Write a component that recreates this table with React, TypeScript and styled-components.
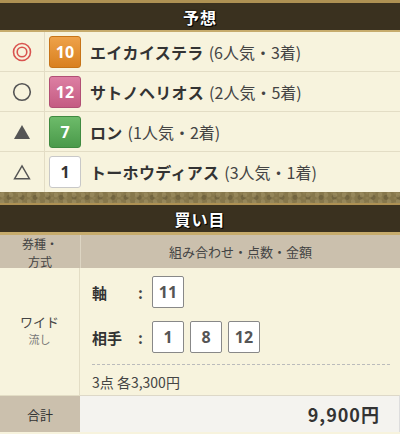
import React from "react";
import styled, { createGlobalStyle, css } from "styled-components";

const Global = createGlobalStyle`
  html, body { margin: 0; padding: 0; background: #f7f3dd; }
  body { font-family: "Noto Sans CJK JP", "Noto Sans", sans-serif; color: #333; }
  * { box-sizing: border-box; }
`;

const Page = styled.div`
  width: 400px;
  height: 434px;
  overflow: hidden;
  background: #f7f3dd;
`;

const SectionHeader = styled.div<{ $top: number; $bottom: number }>`
  height: ${(p) => 27 + p.$top + p.$bottom}px;
  background: #3a311f;
  border-top: ${(p) => p.$top}px solid #ae9153;
  border-bottom: ${(p) => p.$bottom}px solid #c6ab6c;
  display: flex;
  align-items: center;
  justify-content: center;
  color: #fff;
  font-weight: 700;
  font-size: 16px;
  letter-spacing: 1px;
  text-shadow: 1px 1px 0 #000, 0 0 2px #000;
`;

const PickList = styled.div`
  display: flex;
  flex-direction: column;
`;

const PickRow = styled.div<{ $last?: boolean }>`
  height: 40px;
  display: grid;
  grid-template-columns: 45px 1fr;
  border-bottom: ${(p) => (p.$last ? "none" : "1px solid #e3ddc5")};
`;

const MarkCell = styled.div`
  display: flex;
  align-items: center;
  justify-content: center;
  border-right: 1px solid #e3ddc5;
`;

const HorseCell = styled.div`
  display: flex;
  align-items: center;
  padding-left: 4px;
  gap: 9px;
`;

const badgeColors = {
  orange: css`
    background: linear-gradient(#eea24a, #d9801f);
    border: 1px solid #c77418;
    color: #fff;
  `,
  pink: css`
    background: linear-gradient(#dd7fa3, #c45b82);
    border: 1px solid #b14f74;
    color: #fff;
  `,
  green: css`
    background: linear-gradient(#6dbb6a, #4a9a4a);
    border: 1px solid #3f8a40;
    color: #fff;
  `,
  white: css`
    background: #fff;
    border: 1px solid #c8c8c8;
    color: #333;
  `,
};

type BadgeColor = keyof typeof badgeColors;

const Badge = styled.div<{ $color: BadgeColor }>`
  width: 32px;
  height: 32px;
  border-radius: 3px;
  display: flex;
  align-items: center;
  justify-content: center;
  font-family: "Noto Sans", "DejaVu Sans", sans-serif;
  font-weight: 700;
  font-size: 16px;
  ${(p) => badgeColors[p.$color]}
`;

const HorseName = styled.span`
  font-weight: 700;
  font-size: 16px;
  color: #333;
  letter-spacing: 0.3px;
`;

const HorseInfo = styled.span`
  font-weight: 400;
  font-size: 16px;
  color: #444;
  margin-left: 5px;
`;

const Texture = styled.div`
  height: 11px;
  background-color: #86774b;
  background-image:
    radial-gradient(circle at 20% 40%, rgba(160, 145, 100, 0.6) 0 2px, transparent 3px),
    radial-gradient(circle at 70% 60%, rgba(100, 88, 55, 0.6) 0 2px, transparent 3px),
    radial-gradient(circle at 45% 20%, rgba(150, 135, 90, 0.5) 0 1px, transparent 2px);
  background-size: 9px 7px, 13px 9px, 7px 5px;
`;

const BetTable = styled.div`
  display: grid;
  grid-template-columns: 80px 1fr;
  grid-template-rows: 33px 127px 37px;
`;

const HeadCell = styled.div`
  background: #cbc0ad;
  display: flex;
  flex-direction: column;
  align-items: center;
  justify-content: center;
  text-align: center;
  font-size: 13px;
  color: #444;
  & + & {
    border-left: 1px solid #ddd5c3;
  }
`;

const HeadLine = styled.div`
  font-size: 12px;
  line-height: 17px;
  padding-top: 1px;
`;

const TypeCell = styled.div`
  display: flex;
  flex-direction: column;
  align-items: center;
  justify-content: center;
  border-right: 1px solid #e3ddc5;
  padding-bottom: 4px;
`;

const TypeName = styled.div`
  font-size: 13px;
  color: #444;
  line-height: 19px;
`;

const TypeSub = styled.div`
  font-size: 11px;
  color: #777;
  line-height: 17px;
`;

const ComboCell = styled.div`
  display: flex;
  flex-direction: column;
  padding: 8px 8px 0 12px;
`;

const ComboLine = styled.div<{ $gap: number }>`
  display: flex;
  align-items: center;
  margin-top: ${(p) => p.$gap}px;
`;

const ComboLabel = styled.span`
  width: 46px;
  font-weight: 700;
  font-size: 15px;
  color: #333;
`;

const Colon = styled.span`
  width: 14px;
  font-weight: 700;
  font-size: 15px;
  color: #444;
`;

const NumBoxes = styled.div`
  display: flex;
  gap: 6px;
`;

const NumBox = styled.div`
  width: 32px;
  height: 32px;
  background: #fff;
  border: 1px solid #888;
  border-radius: 2px;
  display: flex;
  align-items: center;
  justify-content: center;
  font-family: "Noto Sans", "DejaVu Sans", sans-serif;
  font-weight: 700;
  font-size: 16px;
  color: #555;
`;

const Dashed = styled.div`
  margin-top: 11px;
  border-top: 1px dashed #bbb;
  margin-right: 2px;
`;

const Summary = styled.div`
  font-size: 14px;
  color: #444;
  margin-top: 7px;
`;

const TotalLabel = styled.div`
  background: #cbc0ad;
  border-top: 1px solid #e3ddc5;
  display: flex;
  align-items: center;
  justify-content: center;
  font-size: 13px;
  color: #333;
`;

const TotalValue = styled.div`
  background: #f4f3ef;
  border-top: 1px solid #ddd8c8;
  border-right: 1px solid #ddd;
  display: flex;
  align-items: center;
  justify-content: flex-end;
  padding-right: 19px;
  font-weight: 700;
  font-size: 18px;
  letter-spacing: 1px;
  color: #333;
`;

const Mark = ({ kind }: { kind: "dbl" | "circle" | "tri" | "otri" }) => {
  if (kind === "dbl")
    return (
      <svg width="20" height="20" viewBox="0 0 20 20">
        <circle cx="10" cy="10" r="8.5" fill="none" stroke="#d9534f" strokeWidth="1.6" />
        <circle cx="10" cy="10" r="4.8" fill="none" stroke="#d9534f" strokeWidth="1.6" />
      </svg>
    );
  if (kind === "circle")
    return (
      <svg width="20" height="20" viewBox="0 0 20 20">
        <circle cx="10" cy="10" r="8.3" fill="none" stroke="#555" strokeWidth="1.6" />
      </svg>
    );
  if (kind === "tri")
    return (
      <svg width="18" height="16" viewBox="0 0 18 16">
        <polygon points="9,1 17,15 1,15" fill="#555" />
      </svg>
    );
  return (
    <svg width="18" height="16" viewBox="0 0 18 16">
      <polygon points="9,1.8 16.5,14.8 1.5,14.8" fill="none" stroke="#555" strokeWidth="1.4" />
    </svg>
  );
};

const picks: { mark: "dbl" | "circle" | "tri" | "otri"; num: string; color: BadgeColor; name: string; info: string }[] = [
  { mark: "dbl", num: "10", color: "orange", name: "エイカイステラ", info: "(6人気・3着)" },
  { mark: "circle", num: "12", color: "pink", name: "サトノヘリオス", info: "(2人気・5着)" },
  { mark: "tri", num: "7", color: "green", name: "ロン", info: "(1人気・2着)" },
  { mark: "otri", num: "1", color: "white", name: "トーホウディアス", info: "(3人気・1着)" },
];

export default function App() {
  return (
    <Page>
      <Global />
      <SectionHeader $top={3} $bottom={2}>予想</SectionHeader>
      <PickList>
        {picks.map((p, i) => (
          <PickRow key={p.num} $last={i === picks.length - 1}>
            <MarkCell>
              <Mark kind={p.mark} />
            </MarkCell>
            <HorseCell>
              <Badge $color={p.color}>{p.num}</Badge>
              <div>
                <HorseName>{p.name}</HorseName>
                <HorseInfo>{p.info}</HorseInfo>
              </div>
            </HorseCell>
          </PickRow>
        ))}
      </PickList>
      <Texture />
      <SectionHeader $top={2} $bottom={3}>買い目</SectionHeader>
      <BetTable>
        <HeadCell>
          <HeadLine>券種・</HeadLine>
          <HeadLine>方式</HeadLine>
        </HeadCell>
        <HeadCell>組み合わせ・点数・金額</HeadCell>
        <TypeCell>
          <TypeName>ワイド</TypeName>
          <TypeSub>流し</TypeSub>
        </TypeCell>
        <ComboCell>
          <ComboLine $gap={0}>
            <ComboLabel>軸</ComboLabel>
            <Colon>:</Colon>
            <NumBoxes>
              <NumBox>11</NumBox>
            </NumBoxes>
          </ComboLine>
          <ComboLine $gap={13}>
            <ComboLabel>相手</ComboLabel>
            <Colon>:</Colon>
            <NumBoxes>
              <NumBox>1</NumBox>
              <NumBox>8</NumBox>
              <NumBox>12</NumBox>
            </NumBoxes>
          </ComboLine>
          <Dashed />
          <Summary>3点 各3,300円</Summary>
        </ComboCell>
        <TotalLabel>合計</TotalLabel>
        <TotalValue>9,900円</TotalValue>
      </BetTable>
    </Page>
  );
}
